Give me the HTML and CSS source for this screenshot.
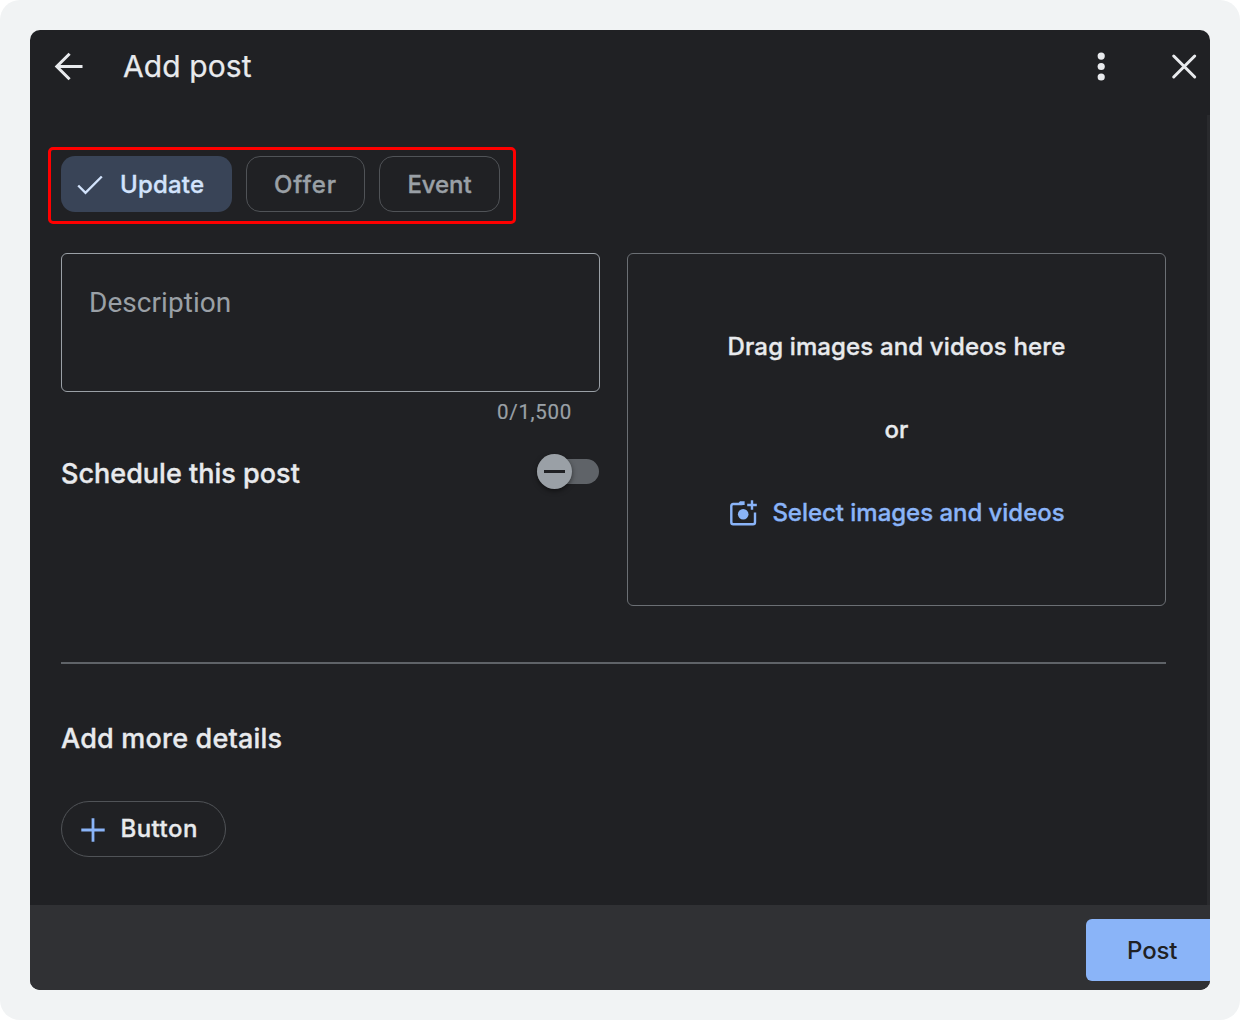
FILE: index.html
```html
<!DOCTYPE html>
<html lang="en">
<head>
<meta charset="utf-8">
<title>Add post</title>
<link rel="stylesheet" href="styles.css">
</head>
<body>
<div class="frame">
  <div class="dialog">
    <header class="header">
      <svg class="back" width="30" height="30" viewBox="0 0 30 30"><path d="M28.5 15.5H3M15.6 2.7 2.8 15.5l12.8 12.8"/></svg>
      <h1 class="title"><span class="t-title">Add post</span></h1>
      <svg class="more" width="10" height="30" viewBox="0 0 10 30"><circle cx="5.2" cy="5.1" r="3.6"/><circle cx="5.2" cy="15.5" r="3.6"/><circle cx="5.2" cy="26" r="3.6"/></svg>
      <svg class="close" width="28" height="28" viewBox="0 0 28 28"><path d="M3.7 4l21 21M24.7 4l-21 21"/></svg>
    </header>
    <main class="main">
      <div class="types">
        <button class="chip chip-on"><svg class="check" width="28" height="22" viewBox="0 0 28 22"><path d="M2.2 11.5l7.3 7.3L25.8 2.5"/></svg><span class="t-update">Update</span></button>
        <button class="chip chip-offer"><span class="t-offer">Offer</span></button>
        <button class="chip chip-event"><span class="t-event">Event</span></button>
      </div>
      <div class="columns">
        <section class="left">
          <div class="field"><span class="t-desc">Description</span></div>
          <div class="counter"><span class="t-count">0/1,500</span></div>
          <div class="schedule">
            <h2 class="heading"><span class="t-sched">Schedule this post</span></h2>
            <div class="switch"><div class="knob"></div></div>
          </div>
        </section>
        <section class="drop">
          <p class="line"><span class="t-drag">Drag images and videos here</span></p>
          <p class="line"><span class="t-or">or</span></p>
          <a class="line select"><svg class="camera" width="30" height="28" viewBox="0 0 30 28"><path class="ln" d="M14.5 5H5.2Q3.3 5 3.3 7v16.2q0 2 2 2H25q2 0 2-2V13.6"/><path d="M9 6 12 2.2h4.6V6z"/><circle cx="15.2" cy="15.3" r="5.3"/><path class="ln" d="M24 1.2v9.6M19.2 6h9.6"/></svg><span class="t-select">Select images and videos</span></a>
        </section>
      </div>
      <hr class="divider">
      <h2 class="heading"><span class="t-more">Add more details</span></h2>
      <button class="pill"><svg class="plus" width="24" height="24" viewBox="0 0 24 24"><path d="M12 .3v23.4M.3 12h23.4"/></svg><span class="t-button">Button</span></button>
    </main>
    <footer class="footer"><button class="post"><span class="t-post">Post</span></button></footer>
  </div>
</div>
</body>
</html>
```
FILE: styles.css
```css
* { box-sizing: border-box; }
body { margin: 0; background: #fff; font-family: Inter, "Liberation Sans", sans-serif; color: #e8eaed; }
h1, h2, p { margin: 0; font-weight: 500; }
button { font: inherit; color: inherit; background: none; border: 0; padding: 0; margin: 0; display: flex; align-items: center; }
span { white-space: nowrap; }
svg { display: block; flex: none; }
.frame { height: 1020px; padding: 30px; background: #f1f3f4; border-radius: 20px; }
.dialog { height: 960px; background: #202124; border-radius: 10px; overflow: hidden; display: flex; flex-direction: column; }

.header { height: 85px; padding: 0 12px 13px 24px; display: flex; align-items: center; }
.back, .close { fill: none; stroke: #e8eaed; stroke-width: 3; }
.close { stroke-linecap: round; margin-left: 64px; }
.more { fill: #e8eaed; }
.title { flex: 1; padding: 0 0 0 39px; font-size: 30px; font-weight: 400; line-height: 40px; letter-spacing: .1px; -webkit-text-stroke: .25px; }

.main { flex: 1; padding: 32px 41px 0 18px; border-right: 3px solid #292a2d; }
.types { width: 468px; height: 77px; border: 3px solid #f00; border-radius: 5px; padding: 0 10px 3px; display: flex; align-items: center; gap: 14px; }
.chip, .heading, .line, .pill { font-weight: 500; -webkit-text-stroke: .35px; }
.chip { height: 56px; border-radius: 14px; border: 1.5px solid #505357; padding-top: 1px; justify-content: center; font-size: 24px; color: #9aa0a6; }
.chip-on { width: 171px; background: #394457; border: 0; color: #d2e3fc; justify-content: flex-start; padding-left: 15px; gap: 16px; letter-spacing: .2px; }
.chip-offer { width: 119px; letter-spacing: .9px; }
.chip-event { width: 121px; letter-spacing: -.1px; }
.check { fill: none; stroke: #d2e3fc; stroke-width: 2.4; }

.columns { margin: 29px 0 0 13px; display: grid; grid-template-columns: 539px 539px; gap: 27px; height: 353px; }
.field { height: 139px; border: 1.5px solid #9aa0a6; border-radius: 6px; padding: 31px 27px; font-family: Roboto, sans-serif; font-size: 28px; line-height: 36px; color: #9aa0a6; }
.t-desc { letter-spacing: .05px; }
.counter { height: 41px; padding-right: 28px; text-align: right; font-family: Roboto, sans-serif; font-size: 20.5px; line-height: 41px; color: #9aa0a6; letter-spacing: .7px; -webkit-text-stroke: .2px; }
.schedule { display: flex; align-items: center; justify-content: space-between; height: 80px; padding: 1px 1px 0 0; }
.heading { font-size: 27px; line-height: 36px; }
.t-sched { letter-spacing: .01px; }
.t-more { letter-spacing: .2px; }
.switch { width: 62px; height: 25px; margin-bottom: 5px; border-radius: 13px; background: #5f6368; display: flex; align-items: center; }
.knob { width: 35px; height: 35px; border-radius: 50%; background: #9aa0a6; box-shadow: 0 2px 5px rgba(0,0,0,.5); display: flex; align-items: center; justify-content: center; }
.knob::before { content: ""; width: 21px; height: 3px; background: #202124; }
.drop { border: 1.5px solid #6b6f74; border-radius: 6px; display: flex; flex-direction: column; align-items: center; justify-content: center; gap: 47px; padding-top: 1px; font-size: 24px; }
.line { line-height: 36px; }
.t-drag { letter-spacing: .14px; }
.select { display: flex; align-items: center; gap: 14px; color: #8ab4f8; }
.t-select { letter-spacing: -.03px; }
.camera { fill: #8ab4f8; }
.camera .ln { fill: none; stroke: #8ab4f8; stroke-width: 2.4; }
.divider { height: 2px; border: 0; background: #5f6368; margin: 56px 0 57px 13px; }
.divider + .heading { margin-left: 13px; }
.pill { width: 165px; height: 56px; margin: 44px 0 0 13px; border: 1.5px solid #505357; border-radius: 28px; padding-left: 18.5px; gap: 16px; font-size: 24px; }
.t-button { letter-spacing: .45px; padding-bottom: 1px; }
.plus { fill: none; stroke: #8ab4f8; stroke-width: 2.8; position: relative; top: 1px; }

.footer { height: 85px; background: #303134; display: flex; align-items: center; justify-content: flex-end; padding-top: 4px; }
.post { width: 124.5px; height: 62px; background: #8ab4f8; color: #202124; border-radius: 6px 0 0 6px; padding: 1px 0 0 41.5px; font-size: 24px; font-weight: 500; letter-spacing: -.1px; }
```
